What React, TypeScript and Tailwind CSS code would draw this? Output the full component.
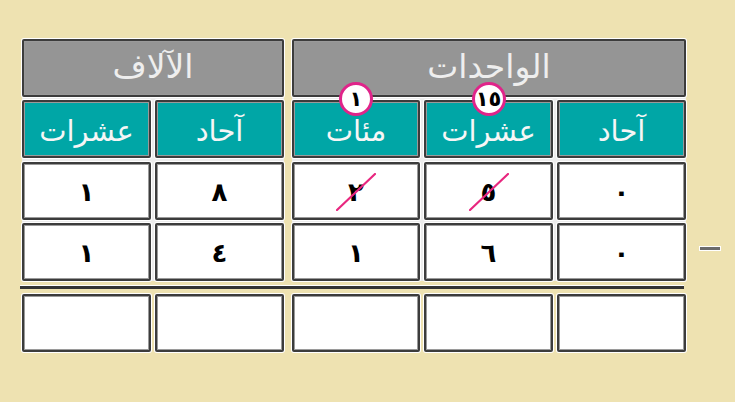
import type { ReactNode } from 'react'

// place-value table: thousands (left) and units (right)
const cellBase =
  'flex items-center justify-center rounded-[2px] border-2 border-[#3c3c3c] shadow-[0_0_0_1px_#ffffff,inset_0_0_0_1px_#9a9a9a]'

function Cell({ w, children, tone = 'white' }: { w: string; children?: ReactNode; tone?: 'white' | 'teal' | 'gray' }) {
  const toneClass =
    tone === 'teal'
      ? 'bg-[#00a6a6] text-[#f6f6f6] text-[29px] pt-[5px]'
      : tone === 'gray'
        ? 'bg-[#959595] text-[#eeeeee] text-[33px] pb-[4px]'
        : 'bg-white text-black text-[26px] font-bold pt-[2px]'
  return <div className={`${cellBase} ${toneClass} ${w} relative h-[58px] leading-none`}>{children}</div>
}

function Struck({ digit }: { digit: string }) {
  return (
    <span className="relative inline-flex items-center justify-center">
      <span>{digit}</span>
      <svg className="absolute left-1/2 top-1/2 -translate-x-1/2 -translate-y-1/2" width="40" height="38" viewBox="0 0 40 38">
        <line x1="1" y1="37" x2="39" y2="1" stroke="#e8277f" strokeWidth="2.2" strokeLinecap="round" />
      </svg>
    </span>
  )
}

function Badge({ label }: { label: string }) {
  return (
    <div className="absolute left-1/2 top-[-20px] z-10 flex h-[34px] w-[34px] -translate-x-1/2 items-center justify-center rounded-full border-[3px] border-[#e0248a] bg-white text-[21px] font-bold leading-none text-black">
      {label}
    </div>
  )
}

const LEFT = ['w-[129px]', 'w-[129px]']
const RIGHT = ['w-[128px]', 'w-[129px]', 'w-[129px]']

export default function App() {
  return (
    <div
      className="h-[402px] w-[735px] overflow-hidden bg-[#eee2b1] pl-[22px] pt-[39px]"
      style={{ fontFamily: '"DejaVu Sans", "Noto Sans", sans-serif' }}
    >
      <div className="flex items-start">
        <div className="flex w-[664px] flex-col">
          {/* top section */}
          <div className="flex gap-[8px]">
            <div className="flex w-[262px] flex-col gap-[3px] bg-[#ececec]">
              <Cell w="w-[262px]" tone="gray">الآلاف</Cell>
              <div className="flex gap-[4px]">
                <Cell w={LEFT[0]} tone="teal">عشرات</Cell>
                <Cell w={LEFT[1]} tone="teal">آحاد</Cell>
              </div>
              <div className="mt-[1px] flex gap-[4px]">
                <Cell w={LEFT[0]}>١</Cell>
                <Cell w={LEFT[1]}>٨</Cell>
              </div>
              <div className="flex gap-[4px]">
                <Cell w={LEFT[0]}>١</Cell>
                <Cell w={LEFT[1]}>٤</Cell>
              </div>
            </div>
            <div className="flex w-[394px] flex-col gap-[3px] bg-[#ececec]">
              <Cell w="w-[394px]" tone="gray">الواحدات</Cell>
              <div className="flex gap-[4px]">
                <Cell w={RIGHT[0]} tone="teal">
                  <Badge label="١" />
                  مئات
                </Cell>
                <Cell w={RIGHT[1]} tone="teal">
                  <Badge label="١٥" />
                  عشرات
                </Cell>
                <Cell w={RIGHT[2]} tone="teal">آحاد</Cell>
              </div>
              <div className="mt-[1px] flex gap-[4px]">
                <Cell w={RIGHT[0]}><Struck digit="٢" /></Cell>
                <Cell w={RIGHT[1]}><Struck digit="٥" /></Cell>
                <Cell w={RIGHT[2]}>٠</Cell>
              </div>
              <div className="flex gap-[4px]">
                <Cell w={RIGHT[0]}>١</Cell>
                <Cell w={RIGHT[1]}>٦</Cell>
                <Cell w={RIGHT[2]}>٠</Cell>
              </div>
            </div>
          </div>

          {/* sum line */}
          <div className="ml-[-2px] mt-[4px] h-[1px] w-[664px] bg-white" />
          <div className="ml-[-2px] h-[3px] w-[664px] bg-[#333333]" />

          {/* result row */}
          <div className="mt-[5px] flex gap-[8px]">
            <div className="flex gap-[4px]">
              <Cell w={LEFT[0]} />
              <Cell w={LEFT[1]} />
            </div>
            <div className="flex gap-[4px]">
              <Cell w={RIGHT[0]} />
              <Cell w={RIGHT[1]} />
              <Cell w={RIGHT[2]} />
            </div>
          </div>
        </div>

        {/* minus sign */}
        <div className="ml-[13px] mt-[207px] h-[5px] w-[22px] border border-white bg-[#6b6b6b]" />
      </div>
    </div>
  )
}
